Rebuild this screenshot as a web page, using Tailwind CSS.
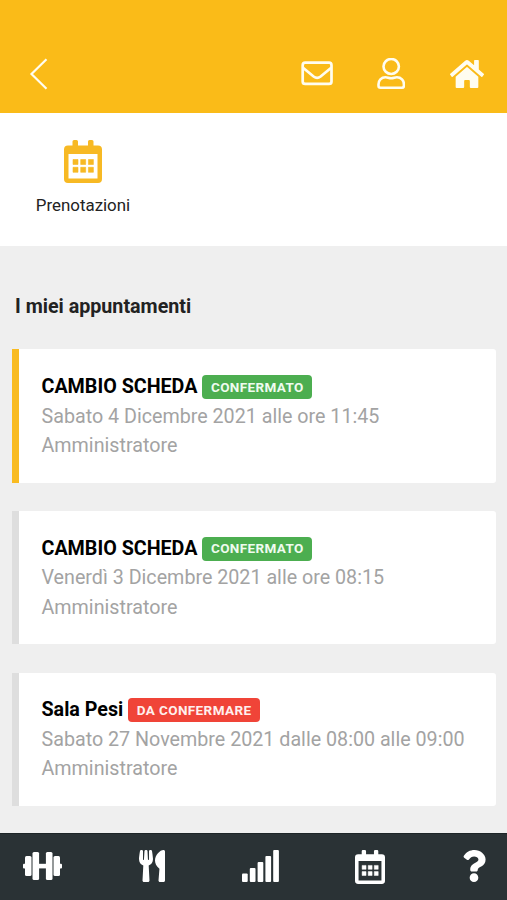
<!DOCTYPE html>
<html lang="it">
<head>
<meta charset="utf-8">
<meta name="viewport" content="width=device-width, initial-scale=1">
<title>I miei appuntamenti</title>
<script src="https://cdn.jsdelivr.net/npm/@tailwindcss/browser@4"></script>
</head>
<body class="bg-[#efefef] font-['Roboto',sans-serif]">
<svg class="hidden">
  <symbol id="calendar" viewBox="0 0 38 43">
    <path fill="currentColor" fill-rule="evenodd" d="M8.500 1.500Q8.500 0 10 0h2.500Q14 0 14 1.500V5.500h10V1.500Q24 0 25.500 0H28q1.500 0 1.500 1.500V5.500H34q4 0 4 4V39q0 4-4 4H4q-4 0-4-4V9.500q0-4 4-4h4.500zM4.500 14v24.500h29V14z"/>
    <path fill="currentColor" d="M9 19.500h5v5H9zm7.700 0h5v5h-5zm7.700 0h5v5h-5zM9 27.300h5v5H9zm7.700 0h5v5h-5zm7.700 0h5v5h-5z" stroke="currentColor" stroke-width=".6" stroke-linejoin="round"/>
  </symbol>
</svg>
<div class="flex h-[900px] w-[507px] flex-col overflow-hidden">
  <header class="flex h-[113px] shrink-0 items-end bg-[#fabb18] pb-[23px] pl-[29px] pr-[22px] text-[#fffdf0]">
    <svg class="h-8 w-5" viewBox="0 0 20 32" fill="none" stroke="currentColor" stroke-width="2.200"><path d="M17.500 1.200 2.500 16l15 14.800"/></svg>
    <div class="ml-auto flex items-center">
      <svg class="h-8 w-8" viewBox="0 0 32 32" fill="none" stroke="currentColor" stroke-width="2.700"><rect x="1.700" y="4.700" width="28.800" height="21.200" rx="2.500"/><path d="M2 9.800l10.600 8.700q3.500 2.600 7 0L30.200 9.800"/></svg>
      <svg class="ml-[44px] h-8 w-7" viewBox="0 0 28 32" fill="none" stroke="currentColor" stroke-width="2.600" stroke-linejoin="round"><ellipse cx="14.200" cy="8.500" rx="7.700" ry="7.500"/><path d="M8.500 19.300c2.500 0 3 1 5.700 1s3.200-1 5.700-1c4.300 0 7 3.200 7 7v1.500q0 2-2 2H3.500q-2 0-2-2v-1.500c0-3.800 2.700-7 7-7z"/></svg>
      <svg class="ml-[45px] mr-[1px] h-8 w-[34px]" viewBox="0 0 576 512" preserveAspectRatio="none" fill="currentColor"><path d="M280.370 148.260L96 300.110V464a16 16 0 0 0 16 16l112.060-.29a16 16 0 0 0 15.920-16V368a16 16 0 0 1 16-16h64a16 16 0 0 1 16 16v95.640a16 16 0 0 0 16 16.050L464 480a16 16 0 0 0 16-16V300L295.670 148.260a12.190 12.190 0 0 0-15.300 0zM571.600 251.470L488 182.560V44.050a12 12 0 0 0-12-12h-56a12 12 0 0 0-12 12v72.610L318.470 43a48 48 0 0 0-61 0L4.340 251.470a12 12 0 0 0-1.600 16.900l25.500 31A12 12 0 0 0 45.150 301l235.220-193.740a12.190 12.190 0 0 1 15.300 0L530.900 301a12 12 0 0 0 16.900-1.600l25.500-31a12 12 0 0 0-1.700-16.930z"/></svg>
    </div>
  </header>
  <section class="h-[133px] shrink-0 bg-white pt-[27px]">
    <div class="flex w-[166px] flex-col items-center">
      <svg class="h-[43px] w-[38px] text-[#f7b924]"><use href="#calendar"/></svg>
      <span class="mt-3 text-[16.900px] leading-5 text-[#222]">Prenotazioni</span>
    </div>
  </section>
  <main class="flex flex-1 flex-col pl-3 pr-[11px] pt-[47px]">
    <h1 class="pl-[3px] text-[19.700px] font-bold leading-[28px] text-[#222]">I miei appuntamenti</h1>
    <div class="mt-[28px] flex flex-col gap-[28.300px] text-[19.700px] leading-[29.500px] text-[#a3a3a3]">
      <article class="h-[133.500px] rounded-r-[3px] border-l-[7px] border-[#f9bb20] bg-white pl-[22.500px] pt-[23px]">
        <div class="flex items-center gap-[5px]"><h2 class="font-bold text-black">CAMBIO SCHEDA</h2><span class="mt-px flex h-6 items-center rounded bg-[#4cae50] px-[8.500px] text-[13.500px] tracking-[0.380px] font-bold text-[#effbef]">CONFERMATO</span></div>
        <p>Sabato 4 Dicembre 2021 alle ore 11:45</p>
        <p>Amministratore</p>
      </article>
      <article class="h-[133.500px] rounded-r-[3px] border-l-[7px] border-[#dedede] bg-white pl-[22.500px] pt-[23px]">
        <div class="flex items-center gap-[5px]"><h2 class="font-bold text-black">CAMBIO SCHEDA</h2><span class="mt-px flex h-6 items-center rounded bg-[#4cae50] px-[8.500px] text-[13.500px] tracking-[0.380px] font-bold text-[#effbef]">CONFERMATO</span></div>
        <p>Venerdì 3 Dicembre 2021 alle ore 08:15</p>
        <p>Amministratore</p>
      </article>
      <article class="h-[133.500px] rounded-r-[3px] border-l-[7px] border-[#dedede] bg-white pl-[22.500px] pt-[22.500px]">
        <div class="flex items-center gap-[5px]"><h2 class="font-bold text-black">Sala Pesi</h2><span class="mt-px flex h-6 items-center rounded bg-[#f04438] px-[8.500px] text-[13.500px] tracking-[0.380px] font-bold text-[#fff0ee]">DA CONFERMARE</span></div>
        <p>Sabato 27 Novembre 2021 dalle 08:00 alle 09:00</p>
        <p>Amministratore</p>
      </article>
    </div>
  </main>
  <nav class="flex h-[67px] shrink-0 items-center justify-between border-t border-[#1d2527] bg-[#2a3235] pb-[2px] pl-[23px] pr-[21px] text-white">
    <svg class="h-8 w-[39px]" viewBox="0 0 39 32" fill="currentColor"><rect x="0" y="13.800" width="3" height="4.600" rx="1"/><rect x="36" y="13.800" width="3" height="4.600" rx="1"/><rect x="15" y="13.800" width="9" height="4.600"/><rect x="2" y="6" width="6.500" height="20" rx="1.500"/><rect x="30.500" y="6" width="6.500" height="20" rx="1.500"/><rect x="9.500" y="2" width="6.600" height="28" rx="1.500"/><rect x="22.900" y="2" width="6.600" height="28" rx="1.500"/></svg>
    <svg class="h-8 w-[26px]" viewBox="0 0 416 512" fill="currentColor"><path d="M207.900 15.200c.8 4.700 16.100 94.500 16.100 128.800 0 52.300-27.800 89.600-68.900 104.600L168 486.700c.7 13.700-10.200 25.300-24 25.300H80c-13.700 0-24.700-11.500-24-25.300l12.900-238.100C27.700 233.600 0 196.200 0 144 0 109.600 15.300 19.900 16.100 15.200 19.300-5.100 61.400-5.400 64 16.300v141.200c1.300 3.400 15.100 3.200 16 0 1.400-25.300 7.900-139.200 8-141.800 3.300-20.800 44.700-20.800 47.900 0 .2 2.700 6.600 116.500 8 141.800.9 3.200 14.800 3.400 16 0V16.300c2.600-21.600 44.800-21.400 48-1.100zm119.200 285.700l-15 185.100c-1.200 14 9.900 26 23.900 26h56c13.300 0 24-10.700 24-24V24c0-13.200-10.700-24-24-24-82.500 0-221.400 178.500-64.900 300.900z"/></svg>
    <svg class="h-8 w-[37px]" viewBox="0 0 37 32" fill="currentColor"><rect y="23.500" width="5.700" height="8.500" rx="1"/><rect x="7.800" y="18" width="5.700" height="14" rx="1"/><rect x="15.600" y="12" width="5.700" height="20" rx="1"/><rect x="23.400" y="6" width="5.700" height="26" rx="1"/><rect x="31.200" width="5.700" height="32" rx="1"/></svg>
    <svg class="mt-px h-[34px] w-[30px]"><use href="#calendar"/></svg>
    <svg class="h-8 w-6" viewBox="0 0 384 512" fill="currentColor"><path d="M202.021 0C122.202 0 70.503 32.703 29.914 91.026c-7.363 10.580-5.093 25.086 5.178 32.874l43.138 32.709c10.373 7.865 25.132 6.026 33.253-4.148 25.049-31.381 43.630-49.449 82.757-49.449 30.764 0 68.816 19.799 68.816 49.631 0 22.552-18.617 34.134-48.993 51.164-35.423 19.860-82.299 44.576-82.299 106.405V320c0 13.255 10.745 24 24 24h72.471c13.255 0 24-10.745 24-24v-5.773c0-42.860 125.268-44.645 125.268-160.627C377.504 66.256 286.902 0 202.021 0zM192 373.459c-38.196 0-69.271 31.075-69.271 69.271 0 38.195 31.075 69.270 69.271 69.270s69.271-31.075 69.271-69.271-31.075-69.270-69.271-69.270z"/></svg>
  </nav>
</div>
</body>
</html>
